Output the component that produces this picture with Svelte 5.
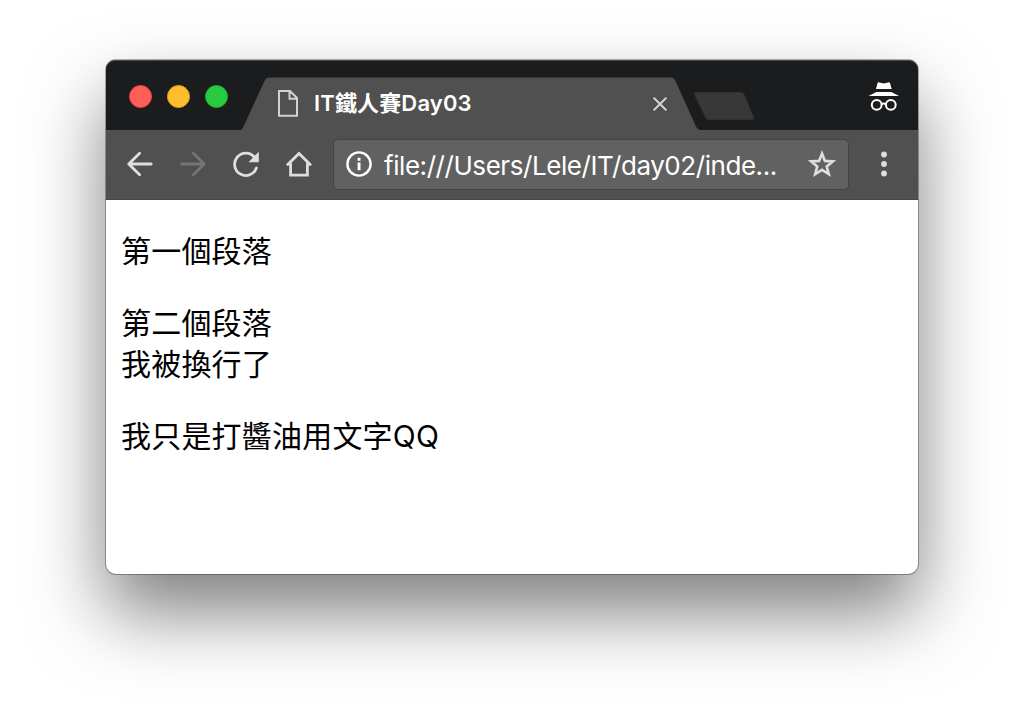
<script>
  let title = 'IT鐵人賽Day03';
  let url = 'file:///Users/Lele/IT/day02/inde...';
  let lights = ['close', 'minimize', 'zoom'];

  // each paragraph is a list of lines
  let paragraphs = [
    ['第一個段落'],
    ['第二個段落', '我被換行了'],
    ['我只是打醬油用文字QQ']
  ];
</script>

<main class="desktop">
  <div class="window">
    <header class="titlebar">
      <div class="lights">
        {#each lights as light}
          <span class="light {light}"></span>
        {/each}
      </div>

      <div class="tab">
        <svg class="page-icon" width="20" height="27" viewBox="0 0 20 27">
          <path d="M1 1h11l7 7v17.7H1z M11.5 1v7.7H19" fill="none" stroke="#d2d2d2" stroke-width="2" />
        </svg>
        <span class="tab-title">{title}</span>
        <svg class="tab-close" width="14" height="14" viewBox="0 0 14 14">
          <path d="M1.2 1.2l11.6 11.6M12.8 1.2L1.2 12.8" stroke="#d2d2d2" stroke-width="2" stroke-linecap="round" />
        </svg>
      </div>

      <svg class="new-tab" width="60" height="28" viewBox="0 0 60 28">
        <path d="M2 .5h44.500q2.500 0 3.500 2l9.600 23q.8 2-1.500 2H15q-2.500 0-3.500-2L.5 2.500Q-.2.5 2 .5z" fill="#383838" stroke="#303132" />
      </svg>

      <svg class="incognito" width="32" height="30" viewBox="0 0 32 30">
        <path d="M9.500 1.300Q9.800 0 11.400.4L15.800 1.600l4.400-1.200q1.500-.4 1.900.9L23.700 6.900H7.900z" fill="#fff" />
        <path d="M.5 14l7.800-3.900h15l7.800 3.900z" fill="#fff" />
        <g fill="none" stroke="#fff" stroke-width="2">
          <circle cx="8.700" cy="22.800" r="4.900" />
          <circle cx="22.800" cy="22.800" r="4.900" />
          <path d="M13.400 22.200q2.400-1.200 4.700 0" />
        </g>
      </svg>
    </header>

    <nav class="toolbar">
      <svg class="icon" width="26" height="26" viewBox="0 0 26 26">
        <path d="M24.200 13H2.200M12.600 2.200L1.800 13l10.800 10.800" />
      </svg>
      <svg class="icon disabled" width="26" height="26" viewBox="0 0 26 26">
        <path d="M1.800 13h22M13.400 2.200L24.200 13 13.400 23.800" />
      </svg>
      <svg class="icon" width="26" height="26" viewBox="0 0 26 26">
        <path d="M21.300 6A11.200 11.200 0 1 0 23.400 17" />
        <path class="solid" d="M25.800.8v10.400H15.400z" />
      </svg>
      <svg class="icon" width="26" height="26" viewBox="0 0 26 26">
        <path d="M1.800 13.600L13 2.400l11.200 11.200M4.600 12.500v11.700h16.800V12.500" stroke-linejoin="miter" />
      </svg>

      <div class="omnibox">
        <svg width="26" height="26" viewBox="0 0 26 26">
          <circle cx="13" cy="13" r="11.600" fill="none" stroke="#fff" stroke-width="2.400" />
          <path d="M11.600 6.800h2.900v2.900h-2.900zM11.600 11.600h2.900v7.600h-2.900z" fill="#fff" />
        </svg>
        <span class="url">{url}</span>
        <svg class="star" width="28" height="28" viewBox="0 0 28 28">
          <path d="M14 3.500l2.900 7.400 8 .5-6.200 5 2.100 7.800-6.800-4.300-6.800 4.300 2.100-7.800-6.200-5 8-.5z" fill="none" stroke="#dedede" stroke-width="2.600" />
        </svg>
      </div>

      <svg class="menu" width="6" height="26" viewBox="0 0 6 26">
        <circle cx="3" cy="3.500" r="2.900" />
        <circle cx="3" cy="13" r="2.900" />
        <circle cx="3" cy="22.500" r="2.900" />
      </svg>
    </nav>

    <section class="page">
      {#each paragraphs as lines}
        <p>
          {#each lines as line, i}
            {#if i > 0}<br />{/if}{line}
          {/each}
        </p>
      {/each}
    </section>
  </div>
</main>

<style>
  :global(body) {
    background: #fff;
  }

  .desktop {
    box-sizing: border-box;
    height: 725px;
    padding: 60px 106px 151px;
    overflow: hidden;
    font-family: Inter, 'Noto Sans CJK TC', sans-serif;
  }

  .window {
    display: flex;
    flex-direction: column;
    height: 514px;
    border-radius: 10px;
    background: #fff;
    box-shadow:
      0 0 0 1px rgba(0, 0, 0, 0.3),
      0 38px 74px rgba(0, 0, 0, 0.51);
  }

  .titlebar {
    display: flex;
    box-sizing: border-box;
    height: 70px;
    padding: 0 18px 0 22.5px;
    border-radius: 9px 9px 0 0;
    background: #1b1c1e;
    box-shadow: inset 0 1px 0 #4a4d4f;
  }

  .lights {
    display: flex;
    gap: 15px;
    padding-top: 25px;
  }

  .light {
    box-sizing: border-box;
    width: 23px;
    height: 23px;
    border-radius: 50%;
  }

  .close {
    border: 1px solid #e2463f;
    background: #ff5f57;
  }

  .minimize {
    border: 1px solid #dfa023;
    background: #ffbd2e;
  }

  .zoom {
    border: 1px solid #1dad2b;
    background: #28ca42;
  }

  .tab {
    display: flex;
    align-items: center;
    box-sizing: border-box;
    width: 461px;
    height: 53px;
    margin: 17px 0 0 12.5px;
    padding: 0 34px 0 38px;
    background: #505050;
    clip-path: path('M0 53 Q2 53 3.500 49.500 L24.500 4 Q26 .5 29 .5 H431 Q434 .5 435.500 4 L456 49.500 Q458 53 461 53 Z');
  }

  .tab-title {
    flex: 1;
    margin: -2px 0 0 16px;
    color: #fff;
    font-size: 22px;
    font-weight: 600;
    line-height: 30px;
    letter-spacing: 0.15px;
    white-space: nowrap;
  }

  .new-tab {
    margin: 32px 0 0 -7px;
  }

  .incognito {
    margin: 22px 0 0 auto;
  }

  .toolbar {
    display: flex;
    align-items: center;
    box-sizing: border-box;
    height: 70px;
    padding: 0 31px 2px 21px;
    border-bottom: 1px solid #454545;
    background: #505050;
  }

  .icon {
    margin-right: 27px;
    fill: none;
    stroke: #dedede;
    stroke-width: 2.8;
    stroke-linecap: round;
    stroke-linejoin: round;
  }

  .icon .solid {
    fill: #dedede;
    stroke: none;
  }

  .disabled {
    stroke: #757575;
  }

  .omnibox {
    display: flex;
    align-items: center;
    box-sizing: border-box;
    width: 516px;
    height: 51px;
    margin: 1px 0 0 -6px;
    padding: 0 12px;
    border: 1px solid #424242;
    border-radius: 5px;
    background: #616161;
  }

  .url {
    flex: 1;
    margin-left: 12px;
    padding-top: 3px;
    color: #fff;
    font-size: 26px;
    line-height: 36px;
    letter-spacing: -0.44px;
    white-space: nowrap;
  }

  .menu {
    margin-left: auto;
    fill: #dedede;
  }

  .page {
    padding: 31px 15px;
    color: #000;
    font-size: 30px;
    line-height: 41.5px;
    letter-spacing: 0.2px;
  }

  .page p {
    margin: 0 0 30px;
  }
</style>
